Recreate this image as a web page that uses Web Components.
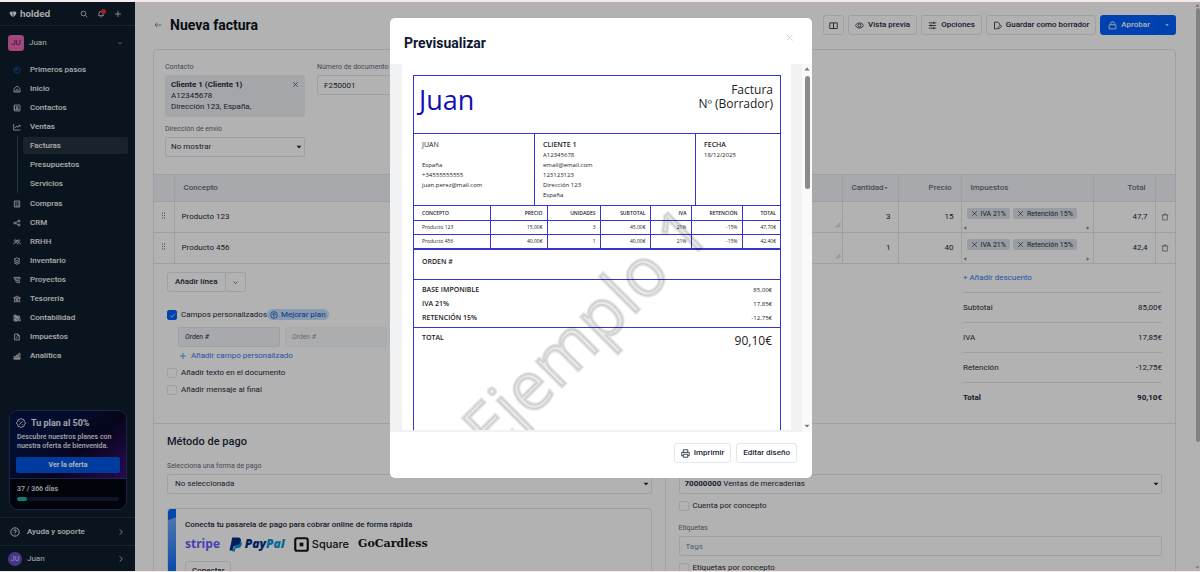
<!DOCTYPE html>
<html lang="es">
<head>
<meta charset="utf-8">
<title>Nueva factura</title>
<style>
html, body {
    height: 100%;
}
body {
    margin: 0;
    overflow: hidden;
    font-family: Roboto, "Liberation Sans", sans-serif;
    font-size: 8px;
    line-height: 12px;
    color: #1b2a3c;
    --line: #e3e6ea;
    --muted: #5f6b7a;
    --blue: #0061fc;
    --link: #2f76f5;
    --soft: #f1f3f7;
}
</style>
</head>
<body>
<app-shell>
    <side-bar slot="nav"></side-bar>
    <invoice-page></invoice-page>
    <preview-modal slot="modal" title="Previsualizar">
        <invoice-doc></invoice-doc>
        <ui-button slot="actions" icon="printer">Imprimir</ui-button>
        <ui-button slot="actions">Editar diseño</ui-button>
    </preview-modal>
</app-shell>
<script>
"use strict";
const ICONS = {
    search: '<circle cx="10.5" cy="10.5" r="7"/><path d="M16 16l6 6"/>',
    bell: '<path d="M4 17c2-2 2-4 2-7a6 6 0 0 1 12 0c0 3 0 5 2 7z"/><path d="M10 20.500h4"/>',
    plus: '<path d="M12 3v18M3 12h18"/>',
    down: '<path d="M5 9l7 7 7-7"/>',
    right: '<path d="M8 4l8 8-8 8"/>',
    close: '<path d="M4 4l16 16M20 4L4 20"/>',
    back: '<path d="M22 12H3M10 5l-7 7 7 7"/>',
    gauge: '<circle cx="12" cy="12" r="9" stroke-dasharray="3 1"/><path d="M12 6v6H6"/>',
    home: '<path d="M3 11l9-8 9 8v10H3z"/><path d="M9 21v-5a3 3 0 0 1 6 0v5"/>',
    contact: '<rect x="4" y="3" width="17" height="18" rx="1"/><circle cx="12.500" cy="9.500" r="2.500"/><path d="M8 17c1-5 8-5 9 0zM2 7h4M2 12h4M2 17h4"/>',
    chart: '<path d="M2 3v18h20"/><path d="M6 15l5-6 4 4 6-6M17 7h4v4"/>',
    receipt: '<path d="M4 3h16v18H4z"/><path d="M8 7h3M8 11h3M8 15h3M14 7h3M14 11h3M14 15h3M8 18h9"/>',
    share: '<circle cx="5" cy="12" r="3"/><circle cx="18" cy="6" r="3"/><circle cx="18" cy="18" r="3"/><path d="M8 11l7-4M8 13l7 4"/>',
    people: '<circle cx="8" cy="9" r="3"/><circle cx="16" cy="9" r="3"/><path d="M2 19c0-7 12-7 12 0M15 14c4-1 7 1 7 5M3 7l2-2M21 7l-2-2"/>',
    layers: '<path d="M12 2l9 5-9 5-9-5z"/><path d="M3 12l9 5 9-5M3 17l9 5 9-5"/>',
    board: '<path d="M3 4h18v5H6a3 3 0 0 1-3-3zM6 9c0 4 3 5 8 5M8 14c0 5 4 6 11 6v-6h-7"/>',
    bank: '<path d="M2 9l10-6 10 6zM5 10v8M10 10v8M14 10v8M19 10v8M2 20h20"/>',
    books: '<path d="M3 3h6v18H3zM9 6h5v15H9zM15 7l4-1 3 14-4 1zM3 8h6M3 16h6M9 11h5"/>',
    tax: '<path d="M5 3h9l5 5v13H5z"/><path d="M9 17l5-6M14 3v5h5M9 11h1M14 17h1"/>',
    bars: '<path d="M3 21v-8h4v8zM10 21V9h4v12zM17 21V4h4v17zM2 21h20"/>',
    help: '<circle cx="12" cy="12" r="10"/><path d="M9 10a3 3 0 1 1 3 3v2M12 17v1"/>',
    percent: '<path d="M12 1l3 2 4 1 1 4 3 4-3 4-1 4-4 1-3 2-3-2-4-1-1-4-3-4 3-4 1-4 4-1z"/><path d="M8 16l8-8M8 8h2M14 16h2"/>',
    book: '<path d="M12 5h10v15H12zM2 5h10v15H2z"/>',
    eye: '<path d="M1 12c5-9 17-9 22 0-5 9-17 9-22 0z"/><circle cx="12" cy="12" r="4"/>',
    sliders: '<path d="M2 5h20M2 12h20M2 19h20M15 2v6M8 9v6M15 16v6"/>',
    draft: '<path d="M11 21H4V3h9l5 5v3M13 21l1-4 6-6 3 3-6 6z"/>',
    lock: '<rect x="3" y="10" width="18" height="11" rx="1"/><path d="M7 10V7a5 5 0 0 1 10 0v3"/>',
    trash: '<path d="M2 6h20M5 6v15h14V6M9 6V3h6v3"/>',
    upgrade: '<circle cx="12" cy="12" r="10"/><path d="M12 18V7M7 12l5-5 5 5"/>',
    printer: '<path d="M6 9V2h12v7M6 18H2V9h20v9h-4M6 14h12v8H6z"/>',
    check: '<path d="M4 12l6 6L20 6"/>',
    caret: '<path d="M2 7h20L12 18z" fill="currentColor" stroke="none"/>',
    left: '<path d="M20 2v20L3 12z" fill="currentColor" stroke="none"/>',
    next: '<path d="M4 2v20l17-10z" fill="currentColor" stroke="none"/>',
    up: '<path d="M2 18h20L12 5z" fill="currentColor" stroke="none"/>',
    grip: '<path d="M7 2h3v4H7zM14 2h3v4h-3zM7 10h3v4H7zM14 10h3v4h-3zM7 18h3v4H7zM14 18h3v4h-3z" fill="currentColor" stroke="none"/>',
    resize: '<path d="M3 22L22 3M12 22l10-10"/>',
    gem: '<path d="M2 8c2-5 6-3 10-3s8-2 10 3c1 4-5 10-10 14C7 18 1 12 2 8z" fill="currentColor" stroke="none"/><path d="M7 4l6 8-2 10" stroke="#0d1e2b" stroke-width="2"/>'
};

class UiIcon extends HTMLElement {
    connectedCallback() {
        const size = this.getAttribute('size') || 8;
        if (!this.shadowRoot) this.attachShadow({ mode: 'open' });
        this.shadowRoot.innerHTML = `
            <style>
:host { display: inline-flex; flex: none; }
svg { width: ${size}px; height: ${size}px; fill: none; stroke: currentColor; stroke-width: 2.200; stroke-linejoin: round; }
            </style>
            <svg viewBox="0 0 24 24" aria-hidden="true">${ICONS[this.getAttribute('name')]}</svg>`;
    }
}
customElements.define('ui-icon', UiIcon);

// Shared by every element that has plain markup: html can use the host's attributes
function define(name, html) {
    customElements.define(name, class extends HTMLElement {
        connectedCallback() {
            if (this.shadowRoot) return;
            this.attachShadow({ mode: 'open' });
            const attr = (key, other = '') => this.getAttribute(key) ?? other;
            this.shadowRoot.innerHTML = `<style>* { box-sizing: border-box; }</style>` + html(attr, this);
        }
    });
}

define('app-shell', () => `
    <style>
:host { display: flex; height: 100vh; position: relative; border: solid #f6e9ec; border-width: 2px 0 1px; box-sizing: border-box; background: white; overflow: hidden; }
main { flex: 1; min-width: 0; overflow: hidden; }
.scroll { width: 5px; display: flex; flex-direction: column; align-items: center; color: #aaa; padding: 1px 0; }
.thumb { width: 4px; height: 434px; border-radius: 2px; background: #b9b9b9; }
.scroll ui-icon:last-child { margin-top: auto; }
#shade { position: absolute; inset: 0; background: rgba(0, 0, 0, .3); display: flex; justify-content: center; align-items: flex-start; padding: 16px 0 0 2px; }
    </style>
    <slot name="nav"></slot>
    <main><slot></slot></main>
    <div class="scroll"><ui-icon name="up" size="5"></ui-icon><div class="thumb"></div><ui-icon name="caret" size="5"></ui-icon></div>
    <div id="shade"><slot name="modal"></slot></div>`);

define('ui-button', (attr) => `
    <style>
:host { display: inline-flex; }
button { display: flex; align-items: center; gap: 4px; height: 20px; padding: 0 6px; border: 1px solid var(--line); border-radius: 3px; background: white; color: inherit; font: 500 8px/12px Roboto, sans-serif; white-space: nowrap; }
:host([label]) button { gap: 0; padding: 0 5px; }
:host([primary]) button { background: var(--blue); border-color: var(--blue); color: white; border-radius: 3px 0 0 3px; padding: 0 7px; }
:host([primary]) button + button { border-radius: 0 3px 3px 0; border-left-color: #0056e6; padding: 0 6px; }
:host([split]) button { border-radius: 3px 0 0 3px; padding: 0 7px; }
:host([split]) button + button { border-radius: 0 3px 3px 0; border-left: 0; padding: 0 6px; }
    </style>
    <button type="button"${attr('label') ? ` aria-label="${attr('label')}"` : ''}>${attr('icon') ? `<ui-icon name="${attr('icon')}" size="9"></ui-icon>` : ''}<slot></slot></button>
    ${attr('menu') ? `<button type="button" aria-label="Más"><ui-icon name="${attr('menu')}" size="${attr('menu') === 'caret' ? 4 : 7}"></ui-icon></button>` : ''}`);

define('nav-item', (attr) => `
    <style>
:host { display: block; }
a { display: flex; align-items: center; gap: 9px; height: 19px; padding-left: 13px; color: #f3f4f6; font-weight: 500; text-decoration: none; }
:host([sub]) { padding: 1px 0; }
:host([sub]) a { height: 17px; padding-left: 7px; border-radius: 2px; }
:host([active]) a { background: #26323f; }
    </style>
    <a href="#">${attr('icon') ? `<ui-icon name="${attr('icon')}" ${attr('icon') === 'gauge' ? 'style="color:#1a78ff"' : ''}></ui-icon>` : ''}<slot></slot></a>`);

define('promo-card', () => `
    <style>
:host { display: block; margin: 0 8px 7px 9px; border: 1px solid #2b3568; border-radius: 9px; overflow: hidden; color: #e8eaf2; font-weight: 500; background: #02060f; }
.top { padding: 4px 6px 5px; background: linear-gradient(140deg, #041444 30%, #0a0828 60%, #3b1072); border-bottom: 1px solid #2b3568; }
h2 { display: flex; align-items: center; gap: 5px; margin: 0 0 2px; font-size: 9px; line-height: 16px; font-weight: 700; }
p { margin: 0 0 6px 1px; font-size: 7px; line-height: 9px; }
button { width: 100%; height: 16px; border: 0; border-radius: 2px; background: #0057e6; color: white; font: 700 7px/12px Roboto, sans-serif; }
.days { padding: 5px 7px 8px; font-size: 7px; line-height: 10px; }
progress { display: block; width: 100%; height: 4px; margin-top: 3px; appearance: none; border: 0; }
progress::-webkit-progress-bar { background: #151d31; border-radius: 2px; }
progress::-webkit-progress-value { background: #10b89a; border-radius: 2px; }
    </style>
    <div class="top">
        <h2><ui-icon name="percent" size="10"></ui-icon>Tu plan al 50%</h2>
        <p>Descubre nuestros planes con nuestra oferta de bienvenida.</p>
        <button type="button">Ver la oferta</button>
    </div>
    <div class="days"><label for="days">37 / 366 días</label><progress id="days" value="37" max="366"></progress></div>`);

define('side-bar', () => `
    <style>
:host { display: flex; flex-direction: column; flex: none; width: 135px; background: #0d1e2b; color: #f3f4f6; }
header { display: flex; align-items: center; gap: 9px; height: 24px; padding: 0 13px 0 9px; border-bottom: 1px solid #223140; }
.logo { display: flex; align-items: center; gap: 3px; margin-right: auto; font: 700 9px/12px Inter, sans-serif; }
.bell { display: flex; position: relative; }
.bell i { position: absolute; top: -1px; right: -1px; width: 5px; height: 5px; border-radius: 50%; background: #f03030; }
.who { display: flex; align-items: center; gap: 5px; padding: 0 12px 0 8px; }
.who ui-icon { margin-left: auto; }
.company { height: 16px; margin: 9px 0; }
.pic { display: grid; place-items: center; width: 16px; height: 16px; border-radius: 3px; background: #e667b4; color: #531443; }
.round .pic { width: 14px; height: 14px; border-radius: 50%; background: #6550c8; color: #dcd6ff; font-size: 7px; }
nav { flex: 1; }
.sub { margin: 0 7px 1px 17px; padding-left: 5px; border-left: 1px solid #3a4855; }
footer > * { height: 28px; border-top: 1px solid #223140; }
footer > :last-child { height: 26px; }
a.who { padding-left: 10px; gap: 7px; color: inherit; font-weight: 500; text-decoration: none; }
a.round { padding-left: 8px; gap: 5px; font-weight: 400; }
.who > ui-icon:first-child { margin: 0; }
.who > ui-icon[name="right"] { margin-right: -2px; }
    </style>
    <header>
        <span class="logo"><ui-icon name="gem" size="8"></ui-icon>holded</span>
        <ui-icon name="search"></ui-icon>
        <span class="bell"><ui-icon name="bell"></ui-icon><i></i></span>
        <ui-icon name="plus"></ui-icon>
    </header>
    <div class="who company"><span class="pic">JU</span>Juan<ui-icon name="down" size="6"></ui-icon></div>
    <nav>
        <nav-item icon="gauge">Primeros pasos</nav-item>
        <nav-item icon="home">Inicio</nav-item>
        <nav-item icon="contact">Contactos</nav-item>
        <nav-item icon="chart">Ventas</nav-item>
        <div class="sub">
            <nav-item sub active>Facturas</nav-item>
            <nav-item sub>Presupuestos</nav-item>
            <nav-item sub>Servicios</nav-item>
        </div>
        <nav-item icon="receipt">Compras</nav-item>
        <nav-item icon="share">CRM</nav-item>
        <nav-item icon="people">RRHH</nav-item>
        <nav-item icon="layers">Inventario</nav-item>
        <nav-item icon="board">Proyectos</nav-item>
        <nav-item icon="bank">Tesorería</nav-item>
        <nav-item icon="books">Contabilidad</nav-item>
        <nav-item icon="tax">Impuestos</nav-item>
        <nav-item icon="bars">Analítica</nav-item>
    </nav>
    <promo-card></promo-card>
    <footer>
        <a class="who" href="#"><ui-icon name="help" size="10"></ui-icon>Ayuda y soporte<ui-icon name="right"></ui-icon></a>
        <a class="who round" href="#"><span class="pic">JU</span>Juan<ui-icon name="right"></ui-icon></a>
    </footer>`);

define('field-input', (attr) => `
    <style>
:host { display: block; }
label { display: block; margin-bottom: 2px; color: var(--muted); font-size: 7px; line-height: 12px; }
input { display: block; width: 100%; height: 20px; padding: 0 6px; border: 1px solid var(--line); border-radius: 2px; background: white; color: inherit; font: 8px/12px Roboto, sans-serif; }
input::placeholder { color: #808a96; }
:host([plain]) input { background: var(--soft); font-style: italic; font-size: 7px; }
    </style>
    ${attr('label') ? `<label for="in">${attr('label')}</label>` : ''}
    <input id="in" type="text" value="${attr('value')}" placeholder="${attr('placeholder')}"${attr('label') ? '' : ' aria-label="Orden #"'}>`);

// A code next to the option's text makes the closed select show it in bold
define('field-select', (attr) => `
    <style>
:host { display: block; }
label { display: block; margin-bottom: 2px; color: var(--muted); font-size: 7px; line-height: 12px; }
div { display: grid; align-items: center; height: 20px; }
select, ui-icon { grid-area: 1 / 1; }
select { width: 100%; height: 20px; padding: 0 5px; border: 1px solid var(--line); border-radius: 2px; background: white; color: inherit; font: 8px/12px Roboto, sans-serif; appearance: none; }
ui-icon { justify-self: end; margin-right: 3px; pointer-events: none; }
:host([wide]) select { padding: 0 7px; }
:host([code]) select { appearance: base-select; min-height: 0; padding: 0 5px; align-items: center; }
select::picker-icon { display: none; }
select button { border: 0; padding: 0; background: none; font: inherit; color: inherit; }
    </style>
    <label for="sel">${attr('label')}</label>
    <div>
        <select id="sel">${attr('code') ? '<button><selectedcontent></selectedcontent></button>' : ''}<option>${attr('code') ? `<b>${attr('code')}</b> ` : ''}${attr('value')}</option></select>
        <ui-icon name="caret" size="6"></ui-icon>
    </div>`);

define('check-box', (attr, host) => `
    <style>
:host { display: flex; align-items: center; }
label { display: flex; align-items: center; gap: 4px; }
input { appearance: none; width: 10px; height: 10px; margin: 0; border: 1px solid var(--line); border-radius: 2px; grid-area: 1 / 1; }
input:checked { background: var(--blue); border-color: var(--blue); }
.box { display: grid; place-items: center; }
.box ui-icon { grid-area: 1 / 1; color: white; pointer-events: none; }
    </style>
    <label><span class="box"><input type="checkbox"${host.hasAttribute('checked') ? ' checked' : ''}>${host.hasAttribute('checked') ? '<ui-icon name="check" size="7"></ui-icon>' : ''}</span><slot></slot></label>`);

define('tax-tag', () => `
    <style>
:host { display: flex; align-items: center; gap: 3px; height: 11px; padding: 0 4px; border-radius: 2px; background: #dce0e7; font-size: 7px; white-space: nowrap; }
button { display: flex; border: 0; padding: 0; background: none; color: inherit; }
    </style>
    <button type="button" aria-label="Quitar"><ui-icon name="close" size="7"></ui-icon></button><slot></slot>`);

const LINES = [
    { name: 'Producto 123', units: 3, price: 15, total: '47,7' },
    { name: 'Producto 456', units: 1, price: 40, total: '42,4' }
];

define('line-table', () => `
    <style>
:host { display: block; }
table { width: 100%; border-collapse: collapse; table-layout: fixed; }
th { height: 27px; padding: 0 9px; background: var(--soft); color: var(--muted); font-weight: 500; text-align: left; white-space: nowrap; border: 1px solid var(--line); border-width: 1px 0 1px 1px; }
td { height: 31px; padding: 0 7px; border: 1px solid var(--line); border-width: 0 0 1px 1px; }
tr > :first-child { border-left: 0; padding: 0; text-align: center; }
tr > :nth-child(2) { border-left-color: var(--line); }
.num { text-align: right; }
input { width: 100%; border: 0; padding: 0; background: none; color: inherit; font: 8px/12px Roboto, sans-serif; }
td:last-child, td.grip { padding: 0; text-align: center; color: var(--muted); }
.name { display: flex; align-items: center; height: 30px; }
.name ui-icon { align-self: flex-end; margin: 0 -6px 4px 0; color: #888; }
.tax { display: grid; align-content: space-between; height: 30px; padding: 6px 0 2px; margin: 0 -4px 0 -2px; }
.row { display: flex; gap: 3px; }
.bar { display: flex; justify-content: space-between; color: #888; margin-left: -4px; }
td:last-child button { border: 0; background: none; padding: 0; color: inherit; }
    </style>
    <table>
        <colgroup><col style="width:20px"><col><col style="width:56px"><col style="width:63px"><col style="width:132px"><col style="width:62px"><col style="width:20px"></colgroup>
        <thead><tr><th></th><th>Concepto</th><th>Cantidad<ui-icon name="caret" size="4"></ui-icon></th><th class="num">Precio</th><th>Impuestos</th><th class="num">Total</th><th></th></tr></thead>
        <tbody>${LINES.map((line) => `
            <tr>
                <td class="grip"><ui-icon name="grip" size="7"></ui-icon></td>
                <td><div class="name"><input aria-label="Concepto" value="${line.name}"><ui-icon name="resize" size="6"></ui-icon></div></td>
                <td><input class="num" aria-label="Cantidad" value="${line.units}"></td>
                <td><input class="num" aria-label="Precio" value="${line.price}"></td>
                <td><div class="tax"><div class="row"><tax-tag>IVA 21%</tax-tag><tax-tag>Retención 15%</tax-tag></div><div class="bar"><ui-icon name="left" size="4"></ui-icon><ui-icon name="next" size="4"></ui-icon></div></div></td>
                <td class="num">${line.total}</td>
                <td><button type="button" aria-label="Borrar"><ui-icon name="trash" size="8"></ui-icon></button></td>
            </tr>`).join('')}
        </tbody>
    </table>`);

define('invoice-totals', () => `
    <style>
:host { display: block; width: 199px; }
a { display: block; padding-bottom: 8px; color: var(--link); text-decoration: none; }
dl { margin: 0; }
dl div { display: flex; justify-content: space-between; align-items: center; height: 30px; border-top: 1px solid var(--line); }
dd { margin: 0; }
dl div:last-child { font-weight: 700; }
    </style>
    <a href="#">+ Añadir descuento</a>
    <dl>
        <div><dt>Subtotal</dt><dd>85,00€</dd></div>
        <div><dt>IVA</dt><dd>17,85€</dd></div>
        <div><dt>Retención</dt><dd>-12,75€</dd></div>
        <div><dt>Total</dt><dd>90,10€</dd></div>
    </dl>`);

define('gateway-banner', () => `
    <style>
:host { display: block; height: 100px; padding: 10px 17px; border: 1px solid var(--line); border-radius: 4px; background: linear-gradient(160deg, #0067f5 10px, #6fa9fa 11px, #0b6cf5 60px) no-repeat 0 0 / 8px 100%; }
p { margin: 0 0 4px; font-weight: 500; }
.logos { display: flex; align-items: center; gap: 9px; height: 18px; margin-bottom: 8px; color: #14161c; white-space: nowrap; }
.logos span { display: flex; align-items: center; gap: 3px; }
.stripe { color: #635bff; font: 700 12px/18px "Open Sans", sans-serif; }
.paypal { font: italic 800 12px/18px "Open Sans", sans-serif; color: #002f86; }
.paypal i { color: #0a94d8; margin-left: -3px; }
.square { font: 500 11px/18px Inter, sans-serif; }
.gocard { font: 700 11px/18px "DejaVu Serif", serif; }
svg { height: 15px; }
    </style>
    <p>Conecta tu pasarela de pago para cobrar online de forma rápida</p>
    <div class="logos">
        <span class="stripe">stripe</span>
        <span class="paypal"><svg viewBox="0 0 24 28" role="img"><path d="M6 1h10c6 0 7 4 6 8-1 6-5 8-11 8H9L7 25H1z" fill="#002f86"/><path d="M22 8c3 2 2 6 1 8-1 4-4 5-9 5h-2l-1 6H6l1-5h2l2-6c6 0 10-2 11-8z" fill="#0a94d8"/></svg>Pay<i>Pal</i></span>
        <span class="square"><svg viewBox="0 0 24 24" role="img"><rect x="2" y="2" width="20" height="20" rx="3" fill="none" stroke="currentColor" stroke-width="3.500"/><rect x="9" y="9" width="6" height="6" fill="currentColor"/></svg>Square</span>
        <span class="gocard">GoCardless</span>
    </div>
    <ui-button>Conectar</ui-button>`);

define('invoice-page', () => `
    <style>
:host { display: block; padding: 13px 19px 0 18px; }
header { display: flex; align-items: center; gap: 4px; height: 20px; margin-bottom: 14px; padding-left: 1px; }
header > ui-icon { color: var(--muted); margin-right: 4px; }
h1 { margin: 0 auto 0 0; font-size: 14px; line-height: 20px; color: #0a1220; }
.card { border: 1px solid var(--line); border-radius: 4px; }
.client { display: grid; grid-template-columns: 140px 140px; gap: 0 12px; padding: 11px 11px 17px; }
.label { color: var(--muted); font-size: 7px; line-height: 12px; margin-bottom: 2px; }
.contact { display: flex; justify-content: space-between; height: 42px; padding: 4px 6px 0; border-radius: 2px; background: #eceef4; line-height: 11px; white-space: nowrap; margin-bottom: 6px; }
.contact ui-icon { margin-top: 2px; }
.lines { display: flex; justify-content: space-between; padding: 8px 13px 10px; height: 159px; box-sizing: border-box; }
.extra { display: flex; flex-direction: column; align-items: flex-start; }
.extra > ui-button { margin-bottom: 17px; }
.custom { display: flex; height: 12px; margin-bottom: 6px; }
.pill { display: flex; align-items: center; gap: 3px; height: 11px; padding: 0 3px; border-radius: 6px; background: #c3dcff; color: #0b4fb5; }
.orders { display: grid; grid-template-columns: 102px 102px; gap: 5px; padding-left: 11px; }
.orders > :last-child { opacity: .5; }
.add { display: flex; align-items: center; gap: 4px; margin: 3px 0 5px 12px; color: var(--link); text-decoration: none; line-height: 12px; }
.extra > check-box { margin-bottom: 5px; }
.split { display: grid; grid-template-columns: 1fr 1fr; border-top: 1px solid var(--line); }
.split > section { padding: 10px 13px; }
.split > section + section { border-left: 1px solid var(--line); }
h2 { margin: 0 0 10px; font-size: 11px; line-height: 16px; font-weight: 500; }
gateway-banner { margin-top: 14px; }
section check-box { margin: 6px 0 10px; }
    </style>
    <header>
        <ui-icon name="back" size="8"></ui-icon>
        <h1>Nueva factura</h1>
        <ui-button icon="book" label="Guía"></ui-button>
        <ui-button icon="eye">Vista previa</ui-button>
        <ui-button icon="sliders">Opciones</ui-button>
        <ui-button icon="draft">Guardar como borrador</ui-button>
        <ui-button icon="lock" primary menu="caret">Aprobar</ui-button>
    </header>
    <div class="card">
        <div class="client">
            <div>
                <div class="label">Contacto</div>
                <div class="contact"><div><b>Cliente 1 (Cliente 1)</b><br>A12345678<br>Dirección 123, España,</div><ui-icon name="close" size="7"></ui-icon></div>
                <field-select label="Dirección de envío" value="No mostrar"></field-select>
            </div>
            <field-input label="Número de documento" value="F250001"></field-input>
        </div>
        <line-table></line-table>
        <div class="lines">
            <div class="extra">
                <ui-button split menu="down">Añadir línea</ui-button>
                <div class="custom"><check-box checked>Campos personalizados</check-box><span class="pill"><ui-icon name="upgrade"></ui-icon>Mejorar plan</span></div>
                <div class="orders"><field-input plain value="Orden #"></field-input><field-input plain value="Orden #"></field-input></div>
                <a class="add" href="#"><ui-icon name="plus" size="8"></ui-icon>Añadir campo personalizado</a>
                <check-box>Añadir texto en el documento</check-box>
                <check-box>Añadir mensaje al final</check-box>
            </div>
            <invoice-totals></invoice-totals>
        </div>
        <div class="split">
            <section>
                <h2>Método de pago</h2>
                <field-select wide label="Selecciona una forma de pago" value="No seleccionada"></field-select>
                <gateway-banner></gateway-banner>
            </section>
            <section>
                <h2>Categorización</h2>
                <field-select label="Cuenta" code="70000000" value="Ventas de mercaderías"></field-select>
                <check-box>Cuenta por concepto</check-box>
                <field-input label="Etiquetas" placeholder="Tags"></field-input>
                <check-box>Etiquetas por concepto</check-box>
            </section>
        </div>
    </div>`);

define('preview-modal', (attr) => `
    <style>
:host { display: flex; flex-direction: column; width: 422px; height: 460px; border-radius: 5px; background: white; overflow: hidden; }
header { display: flex; justify-content: space-between; padding: 15px 18px 11px 14px; }
h2 { margin: 0; font-size: 14px; line-height: 20px; color: #0c1830; }
header button { align-self: flex-start; display: flex; border: 0; padding: 0; background: none; color: #c6c9cd; }
.body { flex: 1; min-height: 0; display: flex; background: #f1f2f4; padding-left: 12px; }
.paper { flex: 1; height: 366px; margin-right: 11px; overflow: hidden; background: white; }
.scroll { display: flex; flex-direction: column; align-items: center; gap: 4px; width: 10px; padding: 2px 0 3px; background: #fafafa; color: #777; }
.thumb { width: 5px; height: 113px; border-radius: 3px; background: #8b8b8b; }
.scroll ui-icon:last-child { margin-top: auto; }
footer { display: flex; justify-content: flex-end; gap: 5px; padding: 11px 15px 15px; }
    </style>
    <header><h2>${attr('title')}</h2><button type="button" aria-label="Cerrar"><ui-icon name="close" size="9"></ui-icon></button></header>
    <div class="body">
        <div class="paper"><slot></slot></div>
        <div class="scroll"><ui-icon name="up" size="6"></ui-icon><div class="thumb"></div><ui-icon name="caret" size="6"></ui-icon></div>
    </div>
    <footer><slot name="actions"></slot></footer>`);

define('invoice-doc', () => `
    <style>
:host { display: block; position: relative; padding: 11px 10px 0 11px; font-family: "Open Sans", "Noto Sans", sans-serif; font-size: 6px; line-height: 10px; color: #222; --ink: #3535cf; }
.frame { height: 600px; border: 1px solid var(--ink); }
.frame > * { border-bottom: 1px solid var(--ink); }
.frame > .total { border: 0; }
.head { display: flex; justify-content: space-between; height: 58px; padding: 7px 7px 0 5px; font-size: 12px; line-height: 14px; text-align: right; }
.head strong { font-size: 27px; line-height: 34px; font-weight: 400; color: #1010b4; }
.parties { display: grid; grid-template-columns: 120px 1fr 85px; height: 72px; }
.parties p { margin: 0; padding: 6px 8px 0; }
.parties p + p { border-left: 1px solid var(--ink); }
.parties b, .parties .me { font-size: 7px; font-weight: 600; }
.parties .me { font-weight: 400; }
table { width: 100%; border-collapse: collapse; table-layout: fixed; font-size: 5px; line-height: 6px; }
td, th { height: 14px; padding: 0 4px; text-align: right; border: solid var(--ink); border-width: 0 0 1px 1px; font-weight: 400; }
th { font-weight: 600; }
tr > :first-child { text-align: left; border-left: 0; padding-left: 8px; }
.order { height: 31px; padding: 7px 8px 0; border-top: 1px solid var(--ink); font-size: 7px; font-weight: 600; }
dl { margin: 0; padding: 3px 8px 2px; }
dl div, .total { display: flex; justify-content: space-between; align-items: center; height: 14px; }
dt, .total b { font-size: 7px; font-weight: 600; }
dd { margin: 0; }
.total { padding: 5px 8px; align-items: flex-start; }
.total span { font-size: 12px; line-height: 16px; }
/* Watermark lies across the whole sheet */
svg { position: absolute; top: 0; left: 0; width: 100%; height: 100%; overflow: visible; pointer-events: none; }
svg text { font-size: 68px; fill: rgba(0, 0, 0, .09); stroke: rgba(0, 0, 0, .11); stroke-width: 3px; }
    </style>
    <div class="frame">
        <div class="head"><strong>Juan</strong><div>Factura<br>Nº (Borrador)</div></div>
        <div class="parties">
            <p><span class="me">JUAN</span><br><br>España<br>+34555555555<br>juan.perez@mail.com</p>
            <p><b>CLIENTE 1</b><br>A12345678<br>email@email.com<br>123123123<br>Dirección 123<br>España</p>
            <p><b>FECHA</b><br>18/12/2025</p>
        </div>
        <table>
            <colgroup><col style="width:76px"><col style="width:57px"><col style="width:53px"><col style="width:50px"><col style="width:41px"><col style="width:51px"><col></colgroup>
            <tr><th>CONCEPTO</th><th>PRECIO</th><th>UNIDADES</th><th>SUBTOTAL</th><th>IVA</th><th>RETENCIÓN</th><th>TOTAL</th></tr>
            <tr><td>Producto 123</td><td>15,00€</td><td>3</td><td>45,00€</td><td>21%</td><td>-15%</td><td>47,70€</td></tr>
            <tr><td>Producto 456</td><td>40,00€</td><td>1</td><td>40,00€</td><td>21%</td><td>-15%</td><td>42,40€</td></tr>
        </table>
        <div class="order">ORDEN #</div>
        <dl>
            <div><dt>BASE IMPONIBLE</dt><dd>85,00€</dd></div>
            <div><dt>IVA 21%</dt><dd>17,85€</dd></div>
            <div><dt>RETENCIÓN 15%</dt><dd>-12,75€</dd></div>
        </dl>
        <div class="total"><b>TOTAL</b><span>90,10€</span></div>
    </div>
    <svg aria-hidden="true"><text transform="translate(90 393) rotate(-45)">Ejemplo 1</text></svg>`);
</script>
</body>
</html>
